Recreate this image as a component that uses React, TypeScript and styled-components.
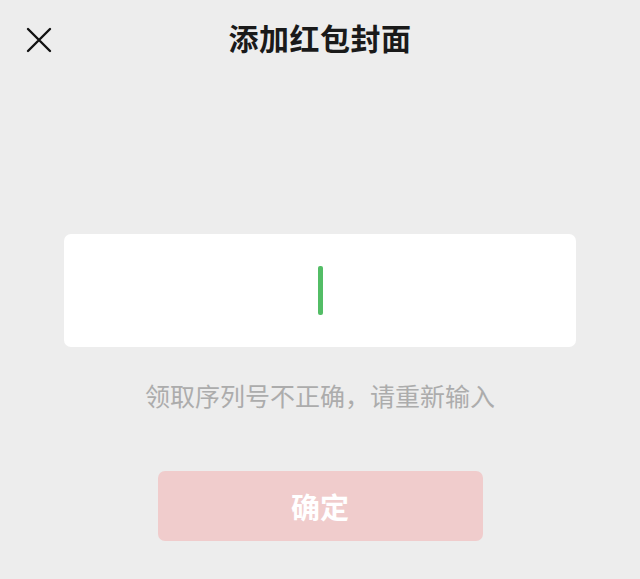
import styled, { createGlobalStyle } from 'styled-components'

const GlobalStyle = createGlobalStyle`
  html, body {
    margin: 0;
    padding: 0;
    background: #ededed;
  }
  body {
    font-family: "Noto Sans CJK SC", "Noto Sans", sans-serif;
  }
`

const Page = styled.div`
  width: 640px;
  height: 579px;
  display: flex;
  flex-direction: column;
  align-items: center;
  background: #ededed;
`

const Header = styled.header`
  width: 100%;
  height: 80px;
  display: grid;
  grid-template-columns: 1fr auto 1fr;
  align-items: center;
`

const CloseButton = styled.button`
  justify-self: start;
  margin-left: 24px;
  width: 30px;
  height: 30px;
  padding: 0;
  border: none;
  background: transparent;
  display: flex;
  align-items: center;
  justify-content: center;
  cursor: pointer;
`

const Title = styled.h1`
  margin: 0 0 6px;
  font-size: 30px;
  line-height: 40px;
  font-weight: 600;
  color: #1a1a1a;
  letter-spacing: 0.5px;
`

const InputBox = styled.div`
  margin-top: 154px;
  width: 512px;
  height: 113px;
  background: #fff;
  border-radius: 7px;
  display: flex;
  align-items: center;
  justify-content: center;
`

const Caret = styled.span`
  display: block;
  width: 5px;
  height: 49px;
  border-radius: 2px;
  background: #53bd66;
`

const ErrorText = styled.p`
  margin: 35px 0 0;
  font-size: 25px;
  line-height: 26px;
  color: #acacac;
`

const ConfirmButton = styled.button`
  margin-top: 63px;
  width: 325px;
  height: 70px;
  border: none;
  border-radius: 7px;
  background: #f0cccc;
  color: #fff;
  font-family: inherit;
  font-size: 29px;
  font-weight: 700;
  cursor: not-allowed;
`

function App() {
  return (
    <Page>
      <GlobalStyle />
      <Header>
        <CloseButton aria-label="关闭">
          <svg width="26" height="26" viewBox="0 0 26 26">
            <path d="M2 2 L24 24 M24 2 L2 24" stroke="#111" strokeWidth="2.4" strokeLinecap="round" />
          </svg>
        </CloseButton>
        <Title>添加红包封面</Title>
        <div />
      </Header>
      <InputBox>
        <Caret />
      </InputBox>
      <ErrorText>领取序列号不正确，请重新输入</ErrorText>
      <ConfirmButton disabled>确定</ConfirmButton>
    </Page>
  )
}

export default App
